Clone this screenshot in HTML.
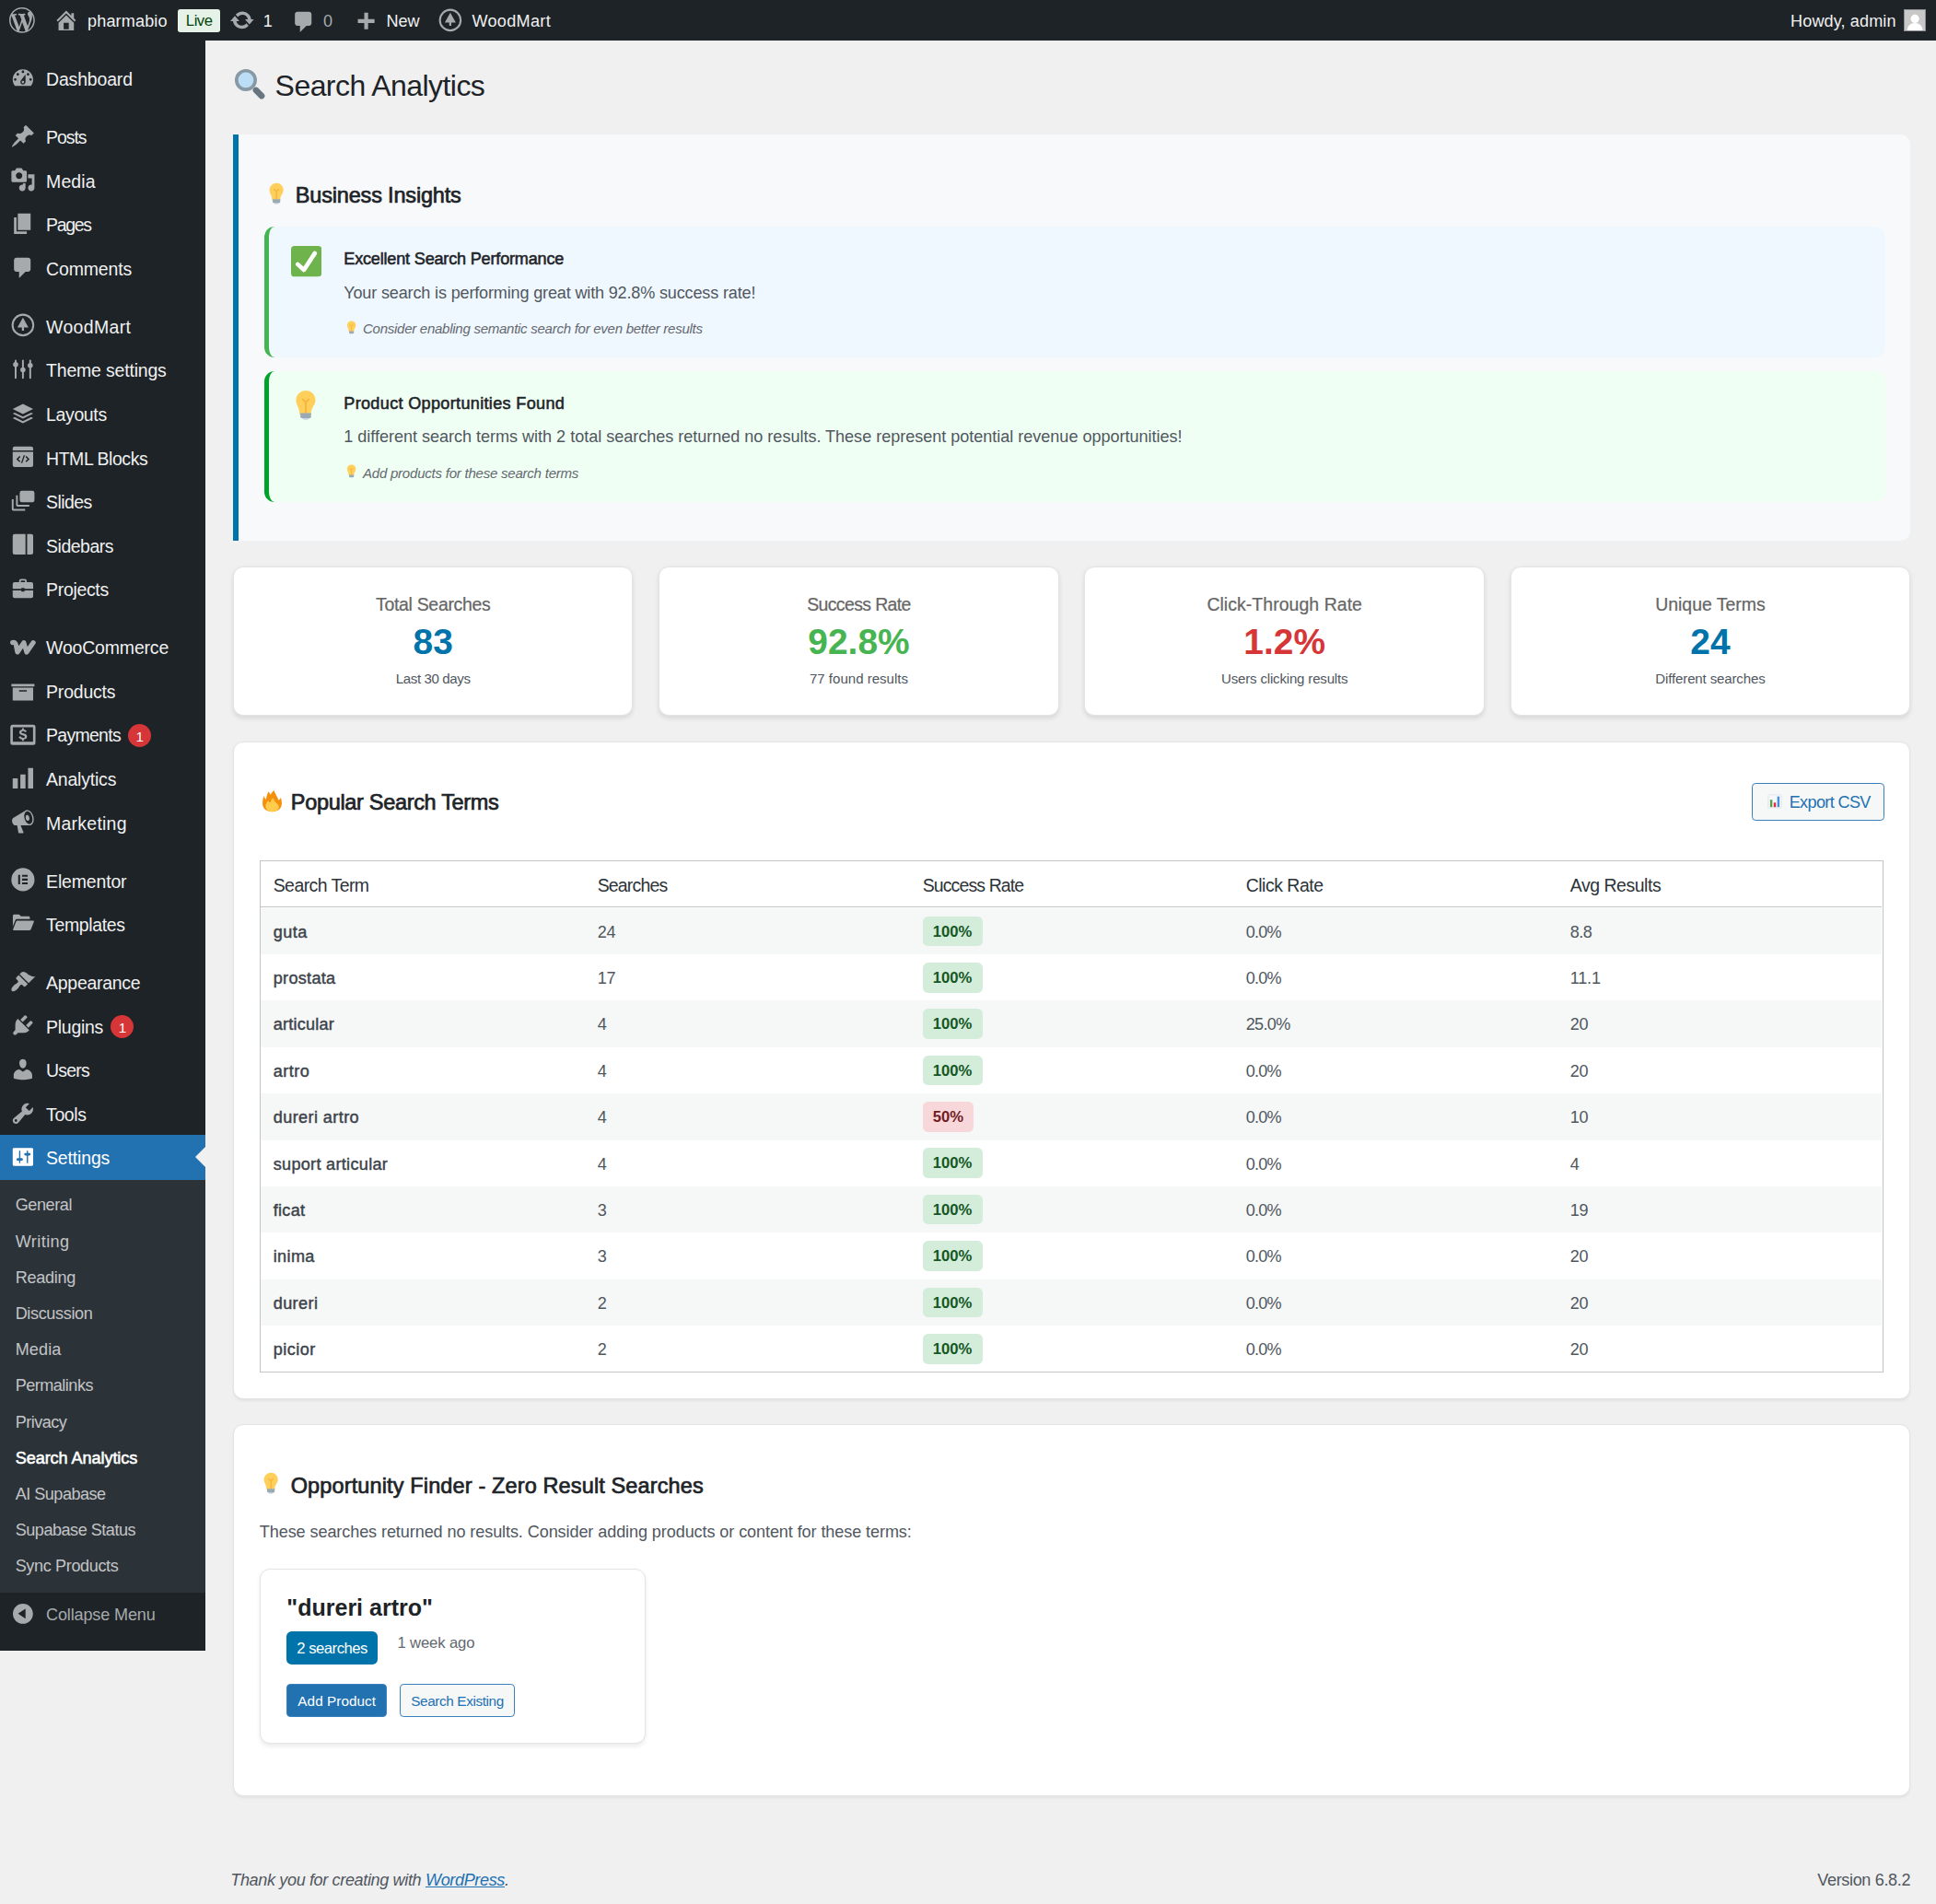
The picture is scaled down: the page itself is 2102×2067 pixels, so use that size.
<!DOCTYPE html>
<html lang="en"><head>
<meta charset="utf-8">
<title>Search Analytics ‹ pharmabio — WordPress</title>
<style>
html{zoom:1.3902;--bs:.135em;background:#f0f0f1;}
*{box-sizing:border-box;}
body{margin:0;padding:0;width:1512px;height:1486.800px;overflow:hidden;position:relative;background:#f0f0f1;color:#3c434a;
 font-family:"Liberation Sans",sans-serif;font-size:13px;line-height:18.200px;}
svg{display:block;}
a{color:#2271b1;}
/* ---------- admin bar ---------- */
#bar{position:absolute;left:0;top:0;width:1512px;height:32px;background:#1d2327;color:#f0f0f1;font-size:13px;line-height:calc(32px + var(--bs));z-index:5;}
#bar .it{position:absolute;top:0;height:32px;white-space:nowrap;}
#bar svg{position:absolute;fill:#a7aaad;}
#bar .st{stroke:#a7aaad;}
#bar .live{position:absolute;top:7.500px;height:17.500px;line-height:calc(17.500px + var(--bs));background:#e6f2e8;color:#00450c;border-radius:2px;width:33.200px;text-align:center;font-size:12px;}
#bar .dim{color:#a7aaad;}
#bar .av{position:absolute;left:1486.700px;top:7.200px;width:17.500px;height:17.500px;background:#c8c8c8;border:1px solid #8c8f94;overflow:hidden;}
/* ---------- side menu ---------- */
#menu{position:absolute;left:0;top:32px;width:160.500px;background:#1d2327;}
#menu .mi{position:absolute;left:0;width:160.500px;height:34.200px;color:#f0f0f1;font-size:14px;line-height:calc(34.200px + var(--bs));}
#menu .mi span.t{position:absolute;left:36px;top:0;white-space:nowrap;}
#menu .mi svg{position:absolute;left:8px;top:7px;width:20px;height:20px;fill:#a7aaad;}
#menu .st{stroke:#a7aaad;}
#menu .mi.cur{background:#2271b1;color:#fff;height:34.600px;}
#menu .mi.cur svg{fill:#fff;}
#menu .mi.cur:after{content:"";position:absolute;right:0;top:9.100px;border:8px solid transparent;border-right-color:#f0f0f1;}
#menu .bdg{display:inline-block;min-width:18px;height:18px;border-radius:9px;background:#d63638;color:#fff;font-size:11px;line-height:calc(18px + var(--bs));text-align:center;margin-left:6px;vertical-align:.300px;letter-spacing:0;}
#sub{position:absolute;left:0;width:160.500px;background:#2c3338;}
#sub div{position:absolute;left:12px;color:#c3c4c7;font-size:13px;line-height:calc(18.200px + var(--bs));white-space:nowrap;}
#sub div.on{color:#fff;-webkit-text-stroke:.030em;}
#menu .col{position:absolute;left:0;width:160px;height:34px;color:#a7aaad;font-size:13px;line-height:calc(34px + var(--bs));}
#menu .col span{position:absolute;left:36px;white-space:nowrap;}
#menu .col svg{position:absolute;left:8px;top:7px;width:20px;height:20px;fill:#a7aaad;}
/* ---------- content ---------- */
#wrap{position:absolute;left:182px;top:42px;width:1310px;}
h1{margin:0;padding:9px 0 4px;font-size:23px;font-weight:400;line-height:calc(29.900px + var(--bs));color:#1d2327;position:relative;height:42.900px;}
h1 span{position:absolute;left:32.800px;top:9px;white-space:nowrap;}
h2{color:#1d2327;font-size:16.900px;font-weight:normal;-webkit-text-stroke:.030em;margin:0;line-height:calc(18.200px + var(--bs));position:relative;}
.em{position:absolute;}
.insights{position:relative;margin-top:20px;height:317.400px;background:#f8f9fa;border-left:4.400px solid #0073aa;border-radius:0 8px 8px 0;}
.insights h2{position:absolute;left:20px;top:37.200px;}
.insights h2 span{position:absolute;left:24.500px;top:0;white-space:nowrap;}
.ins{position:absolute;left:20px;width:1266px;border-left:4px solid #46b450;border-radius:8px;}
.ins.i1{top:72.400px;height:101.500px;background:#f0f8ff;}
.ins.i2{top:184.900px;height:102.300px;background:#f0fff4;border-left-color:#00a32a;}
.ins h4{position:absolute;left:58.600px;top:15.600px;margin:0;font-size:13px;font-weight:normal;-webkit-text-stroke:.030em;color:#1d2327;white-space:nowrap;line-height:calc(18.200px + var(--bs));}
.ins p{position:absolute;left:58.600px;top:41.200px;margin:0;font-size:13px;line-height:calc(19.500px + var(--bs));color:#50575e;white-space:nowrap;}
.ins small{position:absolute;left:73.500px;top:70.300px;font-size:10.830px;font-style:italic;color:#646970;white-space:nowrap;line-height:calc(16.800px + var(--bs));}
.stats{position:relative;margin-top:20px;height:116.600px;}
.stat{position:absolute;top:0;width:312.500px;height:116.600px;background:#fff;border:1px solid #e3e4e6;border-radius:8px;box-shadow:0 2px 4px rgba(0,0,0,.1);text-align:center;}
.stat h3{position:absolute;left:0;width:100%;top:19.800px;margin:0;font-size:14px;-webkit-text-stroke:.012em;font-weight:normal;color:#666;line-height:calc(18.200px + var(--bs));}
.stat b{position:absolute;left:0;width:100%;top:36.500px;font-size:28px;line-height:calc(40px + var(--bs));}
.stat small{position:absolute;left:0;width:100%;top:78.300px;font-size:10.830px;color:#50575e;line-height:calc(16px + var(--bs));}
.card{position:relative;margin-top:20px;background:#fff;border:1px solid #e3e4e6;border-radius:8px;box-shadow:0 1px 2px rgba(0,0,0,.06);}
.pop{height:513.500px;}
.pop h2{position:absolute;left:20px;top:36.900px;}
.pop h2 span{position:absolute;left:24.500px;top:0;white-space:nowrap;}
.btn{position:absolute;border:1px solid #3a7fbb;border-radius:3px;background:#f6f7f7;color:#2271b1;font-size:13px;white-space:nowrap;}
.pop .btn{left:1185.300px;top:31.600px;width:103.600px;height:30px;line-height:calc(27.300px + var(--bs));}
.pop .btn span{position:absolute;left:28.700px;top:0;}
.tbl{position:absolute;left:20px;top:92px;width:1268px;height:400.200px;border:1px solid #c3c4c7;background:#fff;}
.tbl .hd{position:absolute;left:0;top:0;width:1266px;height:36.100px;border-bottom:1px solid #c3c4c7;font-size:14px;color:#2c3338;line-height:calc(35.800px + var(--bs));}
.tbl .r{position:absolute;left:0;width:1266px;height:36.200px;line-height:calc(36.200px + var(--bs));color:#50575e;}
.tbl .r.o{background:#f6f7f7;}
.tbl span{position:absolute;top:0;white-space:nowrap;}
.tbl .c1{left:10px;}.tbl .c2{left:263.200px;}.tbl .c3{left:517.100px;}.tbl .c4{left:769.600px;}.tbl .c5{left:1022.800px;}
.tbl .r .c1{color:#3c434a;-webkit-text-stroke:.024em;}
.tbl .bg{top:6.400px;height:23.400px;line-height:calc(23.400px + var(--bs));padding:0 8px;border-radius:4px;background:#d4edda;color:#155724;font-size:12px;font-weight:bold;}
.tbl .bg.red{background:#f8d7da;color:#721c24;}
.opp{height:290.400px;}
.opp h2{position:absolute;left:20px;top:36.900px;}
.opp h2 span{position:absolute;left:24.400px;top:0;white-space:nowrap;}
.opp p{position:absolute;left:20px;top:73.300px;margin:0;font-size:13px;line-height:calc(19.500px + var(--bs));color:#50575e;white-space:nowrap;}
.oc{position:absolute;left:20.400px;top:111.700px;width:301.300px;height:136.800px;border:1px solid #e2e4e7;border-radius:8px;background:#fff;box-shadow:0 2px 4px rgba(0,0,0,.08);}
.oc h4{position:absolute;left:20.100px;top:16.500px;margin:0;font-size:18px;line-height:calc(24px + var(--bs));font-weight:bold;color:#1d2327;white-space:nowrap;}
.oc .sb{position:absolute;left:20.100px;top:48.100px;height:26.300px;line-height:calc(26.300px + var(--bs));width:70.900px;text-align:center;background:#0073aa;color:#fff;border-radius:4px;font-size:12px;}
.oc .ago{position:absolute;left:106.500px;top:47.300px;line-height:calc(19.500px + var(--bs));font-size:12px;color:#646970;white-space:nowrap;}
.oc .btn{top:89.600px;height:25.800px;line-height:calc(24px + var(--bs));font-size:11px;text-align:center;}
.oc .b1{left:20.100px;width:78.300px;background:#2271b1;color:#fff;}
.oc .b2{left:108.600px;width:89.500px;}
#ft{position:absolute;top:1457.200px;left:180px;width:1312px;font-size:13px;line-height:calc(20px + var(--bs));color:#50575e;}
#ft i{position:absolute;left:0;top:0;white-space:nowrap;}
#ft a{text-decoration:underline;}
#ft span{position:absolute;right:0;top:0;white-space:nowrap;}

</style>
</head>
<body>
<div id="bar">
<div class="it" style="left:7px"><svg style="left:0;top:6px;width:20px;height:20px" viewBox="0 0 20 20" class="i20"><path d="M20 10c0-5.51-4.49-10-10-10C4.48 0 0 4.49 0 10c0 5.52 4.48 10 10 10 5.51 0 10-4.48 10-10zM7.78 15.37L4.37 6.22c.55-.02 1.17-.08 1.17-.08.5-.06.44-1.13-.06-1.11 0 0-1.45.11-2.37.11-.18 0-.37 0-.58-.01C4.12 2.69 6.87 1.11 10 1.11c2.33 0 4.45.87 6.05 2.34-.68-.11-1.65.39-1.65 1.58 0 .74.45 1.36.9 2.1.35.61.55 1.36.55 2.46 0 1.49-1.4 5-1.4 5l-3.03-8.37c.54-.02.82-.17.82-.17.5-.05.44-1.25-.06-1.22 0 0-1.44.12-2.38.12-.87 0-2.33-.12-2.33-.12-.5-.03-.56 1.2-.06 1.22l.92.08 1.26 3.41zM17.41 10c.24-.64.74-1.87.43-4.25.7 1.29 1.05 2.71 1.05 4.25 0 3.29-1.73 6.24-4.4 7.78.97-2.59 1.94-5.2 2.92-7.78zM6.1 18.09C3.12 16.65 1.11 13.53 1.11 10c0-1.3.23-2.48.72-3.59C3.25 10.3 4.67 14.2 6.1 18.09zm4.03-6.63l2.58 6.98c-.86.29-1.76.45-2.71.45-.79 0-1.57-.11-2.29-.33.81-2.38 1.62-4.74 2.42-7.1z"></path></svg></div>
<div class="it" style="left:42px"><svg style="left:0;top:6px;width:20px;height:20px" viewBox="0 0 20 20" class=""><path d="M16 8.5l1.53 1.53-1.06 1.06L10 4.62l-6.47 6.47-1.06-1.06L10 2.5l4 4v-2h2v4zm-6-2.46l6 5.99V18H4v-5.97zM12 17v-5H8v5h4z"></path></svg><span style="position: absolute; left: 26.4px; letter-spacing: 0.102px;" class="abt">pharmabio</span></div>
<div class="live" style="left: 138.9px; letter-spacing: -0.359px;">Live</div>
<div class="it" style="left:179px"><svg style="left:0;top:6px;width:20px;height:20px" viewBox="0 0 20 20" class=""><path d="M10.2 3.28c3.53 0 6.43 2.61 6.92 6h2.08l-3.5 4-3.5-4h2.32c-.45-1.97-2.21-3.45-4.32-3.45-1.45 0-2.73.71-3.54 1.78L4.95 5.66C6.23 4.2 8.11 3.28 10.2 3.28zm-.4 13.44c-3.52 0-6.43-2.61-6.92-6H.8l3.5-4c1.17 1.33 2.33 2.67 3.5 4H5.48c.45 1.97 2.21 3.45 4.32 3.45 1.45 0 2.73-.71 3.54-1.78l1.71 1.95c-1.28 1.46-3.15 2.38-5.25 2.38z"></path></svg><span style="position: absolute; left: 26.5px; letter-spacing: -0.219px;" class="abt">1</span></div>
<div class="it" style="left:226px"><svg style="left:1.100px;top:7.400px;width:20px;height:20px" viewBox="0 0 20 20" class=""><path d="M5 2h9c1.1 0 2 .9 2 2v7c0 1.1-.9 2-2 2h-2l-5 5v-5H5c-1.1 0-2-.9-2-2V4c0-1.1.9-2 2-2z"></path></svg><span style="position: absolute; left: 26.5px; letter-spacing: -0.219px;" class="abt dim">0</span></div>
<div class="it" style="left:275.500px"><svg style="left:-.300px;top:7.900px;width:20px;height:20px" viewBox="0 0 20 20" class=""><path d="M17 7v3h-5v5H9v-5H4V7h5V2h3v5h5z"></path></svg><span style="position: absolute; left: 26.3px; letter-spacing: -0.033px;" class="abt">New</span></div>
<div class="it" style="left:342px"><svg style="left:0;top:6px;width:20px;height:20px" viewBox="0 0 20 20" class=""><circle cx="10" cy="10" r="8.1" fill="none" stroke-width="1.5" class="st"></circle><path d="M10 4.2l4.3 7.6h-3.5v2.6H9.2v-2.6H5.7z"></path></svg><span style="position: absolute; left: 26.6px; letter-spacing: 0.237px;" class="abt">WoodMart</span></div>
<div class="it" style="left:1398.4px"><span class="abt" style="letter-spacing: 0.091px;">Howdy, admin</span></div>
<div class="av"><svg viewBox="0 0 16 16" style="left:0;top:0;width:16px;height:16px;fill:#fff"><circle cx="8" cy="6.800" r="3.300"></circle><path d="M2 16c0-4 2.600-6 6-6s6 2 6 6z"></path></svg></div>
</div>
<div id="menu" style="height:1257.1px">
<div class="mi" style="top:12.00px"><svg viewBox="0 0 20 20" class=""><path d="M3.76 16h12.48c1.1-1.37 1.76-3.11 1.76-5 0-4.42-3.58-8-8-8s-8 3.58-8 8c0 1.89.66 3.63 1.76 5zM10 4c.55 0 1 .45 1 1s-.45 1-1 1-1-.45-1-1 .45-1 1-1zM6 6c.55 0 1 .45 1 1s-.45 1-1 1-1-.45-1-1 .45-1 1-1zm8 0c.55 0 1 .45 1 1s-.45 1-1 1-1-.45-1-1 .45-1 1-1zm-5.37 5.55L12 7v6c0 1.1-.9 2-2 2s-2-.9-2-2c0-.57.24-1.08.63-1.45zM4 10c.55 0 1 .45 1 1s-.45 1-1 1-1-.45-1-1 .45-1 1-1zm12 0c.55 0 1 .45 1 1s-.45 1-1 1-1-.45-1-1 .45-1 1-1zm-5 3c0-.55-.45-1-1-1s-1 .45-1 1 .45 1 1 1 1-.45 1-1z"></path></svg><span class="t" style="letter-spacing: -0.114px;">Dashboard</span></div>
<div class="mi" style="top:57.24px"><svg viewBox="0 0 20 20" class=""><path d="M10.44 3.02l1.82-1.82 6.36 6.35-1.83 1.82c-1.05-.68-2.48-.57-3.41.36l-.75.75c-.92.93-1.04 2.35-.35 3.41l-1.83 1.82-2.41-2.41-2.8 2.79c-.42.42-3.38 2.71-3.8 2.29s1.86-3.39 2.28-3.81l2.79-2.79L4.1 9.36l1.83-1.82c1.05.69 2.48.57 3.4-.36l.75-.75c.93-.92 1.05-2.35.36-3.41z"></path></svg><span class="t" style="letter-spacing: -0.76px;">Posts</span></div>
<div class="mi" style="top:91.48px"><svg viewBox="0 0 20 20" class=""><path d="M13 11V4c0-.55-.45-1-1-1h-1.67L9 1H5L3.67 3H2c-.55 0-1 .45-1 1v7c0 .55.45 1 1 1h10c.55 0 1-.45 1-1zM7 4.5c1.38 0 2.5 1.12 2.5 2.5S8.38 9.5 7 9.5 4.5 8.38 4.5 7 5.62 4.5 7 4.5zM14 6h5v10.5c0 1.38-1.12 2.5-2.5 2.5S14 17.88 14 16.5s1.12-2.5 2.5-2.5c.17 0 .34.02.5.05V9h-3V6zm-4 8.05V13h2v3.5c0 1.38-1.12 2.5-2.5 2.5S7 17.88 7 16.5 8.12 14 9.5 14c.17 0 .34.02.5.05z"></path></svg><span class="t" style="letter-spacing: 0.105px;">Media</span></div>
<div class="mi" style="top:125.72px"><svg viewBox="0 0 20 20" class=""><path d="M6 15V2h10v13H6zm-1 1h8v2H3V5h2v11z"></path></svg><span class="t" style="letter-spacing: -0.94px;">Pages</span></div>
<div class="mi" style="top:159.96px"><svg viewBox="0 0 20 20" class=""><path d="M5 2h9c1.1 0 2 .9 2 2v7c0 1.1-.9 2-2 2h-2l-5 5v-5H5c-1.1 0-2-.9-2-2V4c0-1.1.9-2 2-2z"></path></svg><span class="t" style="letter-spacing: -0.099px;">Comments</span></div>
<div class="mi" style="top:205.20px"><svg viewBox="0 0 20 20" class=""><circle cx="10" cy="10" r="8.1" fill="none" stroke-width="1.5" class="st"></circle><path d="M10 4.2l4.3 7.6h-3.5v2.6H9.2v-2.6H5.7z"></path></svg><span class="t" style="letter-spacing: 0.255px;">WoodMart</span></div>
<div class="mi" style="top:239.44px"><svg viewBox="0 0 20 20" class=""><rect x="3.6" y="2.5" width="1.4" height="15" rx=".7"></rect><circle cx="4.3" cy="6.3" r="2"></circle><rect x="9.3" y="2.5" width="1.4" height="15" rx=".7"></rect><circle cx="10" cy="10.5" r="2"></circle><rect x="15" y="2.5" width="1.4" height="15" rx=".7"></rect><circle cx="15.7" cy="7" r="2"></circle></svg><span class="t" style="letter-spacing: -0.121px;">Theme settings</span></div>
<div class="mi" style="top:273.68px"><svg viewBox="0 0 20 20" class=""><path d="M10 2.5l8 4-8 4-8-4z"></path><path d="M3.6 9.3L2 10.1l8 4 8-4-1.6-.8-6.4 3.2z"></path><path d="M3.6 12.8L2 13.6l8 4 8-4-1.6-.8-6.4 3.2z"></path></svg><span class="t" style="letter-spacing: -0.248px;">Layouts</span></div>
<div class="mi" style="top:307.92px"><svg viewBox="0 0 20 20" class=""><path fill-rule="evenodd" d="M3.5 2h13A1.5 1.5 0 0 1 18 3.500V5H2V3.5A1.5 1.5 0 0 1 3.5 2zM2 6.2h16v10.300a1.5 1.5 0 0 1-1.5 1.5h-13A1.5 1.5 0 0 1 2 16.500zM7.300 9.300L4.800 11.800l2.500 2.500.8-.8-1.700-1.700 1.700-1.700zm5.400 0l-.8.8 1.700 1.700-1.700 1.700.8.8 2.500-2.500zM10.600 8.800l-2.100 6.100h1l2.100-6.100z"></path></svg><span class="t" style="letter-spacing: -0.311px;">HTML Blocks</span></div>
<div class="mi" style="top:342.16px"><svg viewBox="0 0 20 20" class=""><rect x="7.5" y="2" width="11.5" height="9" rx="1.6"></rect><path d="M4.600 5.500h1.400v7.500h9v1.400h-9.200a1.200 1.200 0 0 1-1.200-1.200z"></path><path d="M1.300 8.700h1.400v7.500h9v1.400H2.500a1.200 1.200 0 0 1-1.200-1.200z"></path></svg><span class="t" style="letter-spacing: -0.401px;">Slides</span></div>
<div class="mi" style="top:376.40px"><svg viewBox="0 0 20 20" class=""><path d="M3.500 2h8.500v16H3.500A1.500 1.500 0 0 1 2 16.500v-13A1.500 1.500 0 0 1 3.500 2zM13.300 2h3.200A1.500 1.500 0 0 1 18 3.500v13a1.500 1.500 0 0 1-1.500 1.500h-3.200z"></path></svg><span class="t" style="letter-spacing: -0.338px;">Sidebars</span></div>
<div class="mi" style="top:410.64px"><svg viewBox="0 0 20 20" class=""><path fill-rule="evenodd" d="M7 5V4.200A1.700 1.700 0 0 1 8.700 2.500h2.600A1.700 1.700 0 0 1 13 4.200V5h3.500A1.500 1.500 0 0 1 18 6.500V10.300H11.200V9.600H8.800v.7H2V6.500A1.500 1.500 0 0 1 3.500 5zm1.300 0h3.400v-.7a.5.5 0 0 0-.5-.5H8.800a.5.5 0 0 0-.5.5zM2 11.500h6.800v.9h2.400v-.9H18v4.500a1.500 1.500 0 0 1-1.500 1.500h-13A1.500 1.500 0 0 1 2 16z"></path></svg><span class="t" style="letter-spacing: -0.223px;">Projects</span></div>
<div class="mi" style="top:455.88px"><svg viewBox="0 0 20 20" class=""><path d="M1.900 6.900Q4.100 6.300 4.600 8.800L5.700 14.400L10.700 7L12.900 14.400L18.100 6.900" fill="none" class="st" stroke-width="3.700" stroke-linecap="round" stroke-linejoin="round"></path></svg><span class="t" style="letter-spacing: -0.112px;">WooCommerce</span></div>
<div class="mi" style="top:490.12px"><svg viewBox="0 0 20 20" class=""><path transform="translate(0 .6)" d="M19 4v2H1V4h18zM2 7h16v10H2V7zm11 3V9H7v1h6z"></path></svg><span class="t" style="letter-spacing: -0.129px;">Products</span></div>
<div class="mi" style="top:524.36px"><svg viewBox="0 0 20 20" class=""><path fill-rule="evenodd" d="M2 2.700h16a1.800 1.800 0 0 1 1.800 1.800v12.300a1.800 1.800 0 0 1-1.800 1.800H2a1.800 1.800 0 0 1-1.800-1.800V4.500A1.800 1.800 0 0 1 2 2.700zm.1 2v11.300h15.800V4.700z"></path><path transform="translate(10 10.400) scale(1.150 1.120) translate(-10 -9.750)" d="M9.400 5.300h1.200v.9c1 .1 1.700.6 2 1.400l-1.300.5c-.2-.5-.6-.7-1.200-.7-.7 0-1.100.3-1.100.7 0 .5.500.6 1.500.9 1.300.3 2.300.8 2.300 2.100 0 1.100-.8 1.900-2.200 2.100v.9H9.400v-.9c-1.200-.2-2-.8-2.300-1.800l1.400-.5c.2.700.8 1.100 1.600 1.100.8 0 1.200-.3 1.200-.8 0-.5-.4-.7-1.600-1-1.200-.3-2.200-.8-2.200-2 0-1 .8-1.800 1.900-2z"></path></svg><span class="t" style="letter-spacing: -0.501px;">Payments<span class="bdg">1</span></span></div>
<div class="mi" style="top:558.60px"><svg viewBox="0 0 20 20" class=""><path d="M18 18V2h-4v16h4zm-6 0V7H8v11h4zm-6 0v-8H2v8h4z"></path></svg><span class="t" style="letter-spacing: -0.137px;">Analytics</span></div>
<div class="mi" style="top:592.84px"><svg viewBox="0 0 20 20" class=""><path fill-rule="evenodd" d="M18.150 5.940c.46 1.620.38 3.220-.02 4.480-.42 1.280-1.260 2.180-2.300 2.480-.16.06-.26.06-.4.06-.06.020-.12.020-.18.020-.06.020-.14.020-.22.020h-6.800l2.220 5.500c.02.140-.06.260-.14.340-.08.100-.24.160-.34.160H6.950c-.1 0-.26-.06-.34-.16-.08-.08-.16-.2-.14-.34l-1-5.500H4.250l-.02-.02c-.5.06-1.080-.18-1.540-.62s-.88-1.080-1.060-1.880c-.24-.8-.2-1.560-.02-2.200.18-.62.58-1.080 1.060-1.300l.02-.02 9-5.400c.1-.06.18-.1.240-.16.060-.04.140-.08.240-.12.160-.08.280-.12.500-.18 1.040-.3 2.240.1 3.220.98s1.840 2.240 2.260 3.860zm-2.580 5.980h-.02c.4-.1.740-.34 1.040-.7.580-.7.860-1.760.86-3.040 0-.64-.1-1.300-.28-1.980-.34-1.360-1.020-2.500-1.780-3.240s-1.680-1.100-2.460-.88c-.82.220-1.400.96-1.700 2-.32 1.040-.28 2.360.06 3.720.38 1.360 1 2.500 1.800 3.240.78.740 1.620 1.100 2.480.88zm-2.540-7.080c.22-.04.42-.02.62.04.38.16.76.48 1.020 1s.42 1.200.42 1.780c0 .3-.04.56-.12.8-.18.480-.44.840-.86.940-.34.100-.8-.06-1.140-.4s-.64-.86-.78-1.500c-.18-.62-.12-1.240.02-1.720s.48-.84.820-.94z"></path></svg><span class="t" style="letter-spacing: 0.185px;">Marketing</span></div>
<div class="mi" style="top:638.08px"><svg viewBox="0 0 20 20" class=""><path fill-rule="evenodd" d="M10 .950a9.050 9.050 0 1 1 0 18.100 9.050 9.050 0 0 1 0-18.100zM6.300 6.300v7.400h1.500V6.300zm3 0v1.500h4.400V6.300zm0 2.950v1.500h4.400v-1.500zm0 2.950v1.500h4.400v-1.500z"></path></svg><span class="t" style="letter-spacing: -0.102px;">Elementor</span></div>
<div class="mi" style="top:672.32px"><svg viewBox="0 0 20 20" class=""><g transform="translate(.700 -.200) scale(.940)"><path d="M1.500 4.200c0-.7.500-1.200 1.200-1.200h4l1.600 1.700h6.200c.7 0 1.200.5 1.200 1.200V7H5.200c-.8 0-1.400.4-1.700 1.100L1.500 13z"></path><path d="M5.300 8.300h13c.6 0 .9.500.7 1L16.600 15.400c-.2.500-.7.900-1.300.9H2.300c-.5 0-.8-.4-.6-.9L4.100 9.200c.2-.5.700-.9 1.200-.9z"></path></g></svg><span class="t" style="letter-spacing: -0.24px;">Templates</span></div>
<div class="mi" style="top:717.56px"><svg viewBox="0 0 20 20" class=""><path d="M14.48 11.06L7.41 3.99l1.5-1.5c.5-.56 2.3-.47 3.51.32 1.21.8 1.43 1.28 2.91 2.1 1.18.64 2.45 1.26 4.45.85zm-.71.71L6.7 4.7 4.93 6.47c-.39.39-.39 1.02 0 1.41l1.06 1.06c.39.39.39 1.03 0 1.42-.6.6-1.43 1.11-2.21 1.69-.35.26-.7.53-1.01.84C1.43 14.23.4 16.08 1.4 17.07c.99 1 2.84-.03 4.18-1.36.31-.31.58-.66.85-1.02.57-.78 1.08-1.61 1.69-2.21.39-.39 1.02-.39 1.41 0l1.06 1.06c.39.39 1.02.39 1.41 0z"></path></svg><span class="t" style="letter-spacing: -0.186px;">Appearance</span></div>
<div class="mi" style="top:751.80px"><svg viewBox="0 0 20 20" class=""><path d="M13.11 4.36L9.87 7.6 8 5.73l3.24-3.24c.35-.34 1.05-.2 1.56.32.52.51.66 1.21.31 1.55zm-8 1.77l.91-1.12 9.01 9.01-1.19.84c-.71.71-2.63 1.16-3.82 1.16H6.14L4.9 17.26c-.59.59-1.54.59-2.12 0-.59-.58-.59-1.53 0-2.12l1.24-1.24v-3.88c0-1.13.4-3.19 1.09-3.89zm7.26 3.97l3.24-3.24c.34-.35 1.04-.21 1.55.31.52.51.66 1.21.31 1.55l-3.24 3.25z"></path></svg><span class="t" style="letter-spacing: -0.184px;">Plugins<span class="bdg">1</span></span></div>
<div class="mi" style="top:786.04px"><svg viewBox="0 0 20 20" class=""><path d="M10 9.25c-2.27 0-2.73-3.44-2.73-3.44C7 4.02 7.82 2 9.97 2c2.16 0 2.98 2.02 2.71 3.81 0 0-.41 3.44-2.68 3.44zm0 2.57L12.72 10c2.39 0 4.52 2.33 4.52 4.53v2.49s-3.65 1.13-7.24 1.13c-3.65 0-7.24-1.13-7.24-1.13v-2.49c0-2.25 1.94-4.48 4.47-4.48z"></path></svg><span class="t" style="letter-spacing: -0.575px;">Users</span></div>
<div class="mi" style="top:820.28px"><svg viewBox="0 0 20 20" class=""><path d="M16.68 9.77c-1.34 1.34-3.3 1.67-4.95.99l-5.41 6.52c-.99.99-2.59.99-3.58 0s-.99-2.59 0-3.57l6.52-5.42c-.68-1.65-.35-3.61.99-4.95 1.28-1.28 3.12-1.62 4.72-1.06l-2.89 2.89 2.82 2.82 2.86-2.87c.53 1.58.18 3.39-1.08 4.65zM3.81 16.21c.4.39 1.04.39 1.43 0 .4-.4.4-1.04 0-1.43-.39-.4-1.03-.4-1.43 0-.39.39-.39 1.03 0 1.43z"></path></svg><span class="t" style="letter-spacing: -0.284px;">Tools</span></div>
<div class="mi cur" style="top:854.52px"><svg viewBox="0 0 20 20" class=""><path d="M18 16V4c0-.55-.45-1-1-1H3c-.55 0-1 .45-1 1v12c0 .55.45 1 1 1h14c.55 0 1-.45 1-1zM8 11h1c.55 0 1 .45 1 1s-.45 1-1 1H8v1.5c0 .28-.22.5-.5.5s-.5-.22-.5-.5V13H6c-.55 0-1-.45-1-1s.45-1 1-1h1V5.5c0-.28.22-.5.5-.5s.5.22.5.5V11zm5-2h-1c-.55 0-1-.45-1-1s.45-1 1-1h1V5.5c0-.28.22-.5.5-.5s.5.22.5.5V7h1c.55 0 1 .45 1 1s-.45 1-1 1h-1v5.5c0 .28-.22.5-.5.5s-.5-.22-.5-.5V9z"></path></svg><span class="t" style="letter-spacing: -0.107px;">Settings</span></div>
<div id="sub" style="top:889.2px;height:322.3px"><div style="top: 10.6px; letter-spacing: -0.299px;">General</div><div style="top: 38.8px; letter-spacing: 0.308px;">Writing</div><div style="top: 67px; letter-spacing: -0.206px;">Reading</div><div style="top: 95.2px; letter-spacing: -0.256px;">Discussion</div><div style="top: 123.4px; letter-spacing: 0.097px;">Media</div><div style="top: 151.6px; letter-spacing: -0.363px;">Permalinks</div><div style="top: 179.8px; letter-spacing: -0.362px;">Privacy</div><div class="on" style="top: 208px; letter-spacing: -0.043px;">Search Analytics</div><div style="top: 236.2px; letter-spacing: -0.357px;">AI Supabase</div><div style="top: 264.4px; letter-spacing: -0.343px;">Supabase Status</div><div style="top: 292.6px; letter-spacing: -0.259px;">Sync Products</div></div>
<div class="col" style="top:1211.4px"><svg viewBox="0 0 20 20" class=""><path d="M10 2.16c4.33 0 7.84 3.51 7.84 7.84s-3.51 7.84-7.84 7.84S2.16 14.33 2.16 10 5.67 2.16 10 2.16zm2 11.72V6.12L6.18 9.97z"></path></svg><span style="letter-spacing: -0.109px;">Collapse Menu</span></div>
</div>
<div id="wrap">
<h1><svg class="em" style="left:.800px;top:11.400px;width:24.800px;height:24.800px" viewBox="0 0 36 36"><path d="M25 25L31.400 31.400" stroke="#66757f" stroke-width="7" stroke-linecap="round" fill="none"></path><circle cx="13.550" cy="13.550" r="12.550" fill="#8899a6"></circle><circle cx="13.550" cy="13.550" r="8.750" fill="#bbddf5"></circle></svg><span style="letter-spacing: -0.388px;">Search Analytics</span></h1>
<div class="insights">
 <h2><svg class="em" style="left:.900px;top:0;width:17.500px;height:17.500px" viewBox="0 0 36 36"><g transform="translate(18 0) scale(1.020 1) translate(-18 0)"><path d="M29 12c0 6.200-5 8.800-5 15.500 0 3.500-3.500 3.800-6 3.800-2.200 0-7-.8-7-3.800C11 20.800 7 18.200 7 12 7 5.800 12.300 1 18.200 1 24.200 1 29 5.800 29 12z" fill="#ffcf5c"></path><path d="M22.200 32.400c0 .8-.9 2.600-4.200 2.600s-4.200-1.800-4.200-2.600v-1.800h8.400z" fill="#ccd6dd"></path><path d="M22.200 10.300a1 1 0 0 0-1.400 0L18 13.100l-2.800-2.800a1 1 0 0 0-1.400 1.400l3.200 3.200V26a1 1 0 0 0 2 0V14.900l3.200-3.200a1 1 0 0 0 0-1.400z" fill="#f7b53c"></path><path d="M24 31a2 2 0 0 1-2 2h-8a2 2 0 0 1 0-4h8a2 2 0 0 1 2 2z" fill="#99aab5"></path><path d="M12 27h12v3H12z" fill="#99aab5"></path></g></svg><span style="letter-spacing: -0.126px;">Business Insights</span></h2>
 <div class="ins i1"><svg class="em" style="left:17.300px;top:15px;width:24px;height:24px" viewBox="0 0 36 36"><rect x="0" y="0" width="36" height="36" rx="4" fill="#6fb34d"></rect><path d="M29.300 6.400a2.500 2.500 0 0 0-3.500.7L14.600 24.300l-5.100-4.700a2.500 2.500 0 0 0-3.400 3.700l7.300 6.700c.5.400 1.100.7 1.700.7.700 0 1.500-.3 2.100-1.200.3-.5 12.800-19.600 12.800-19.600a2.500 2.500 0 0 0-.7-3.500z" fill="#fff"></path></svg>
  <h4 style="letter-spacing: -0.13px;">Excellent Search Performance</h4>
  <p style="letter-spacing: -0.117px;">Your search is performing great with 92.8% success rate!</p>
  <svg class="em" style="left:59.300px;top:72.700px;width:11px;height:11px" viewBox="0 0 36 36"><g transform="translate(18 0) scale(1.020 1) translate(-18 0)"><path d="M29 12c0 6.200-5 8.800-5 15.500 0 3.500-3.500 3.800-6 3.800-2.200 0-7-.8-7-3.800C11 20.800 7 18.200 7 12 7 5.800 12.300 1 18.200 1 24.200 1 29 5.800 29 12z" fill="#ffcf5c"></path><path d="M22.200 32.400c0 .8-.9 2.600-4.200 2.600s-4.200-1.800-4.200-2.600v-1.800h8.400z" fill="#ccd6dd"></path><path d="M22.200 10.300a1 1 0 0 0-1.400 0L18 13.100l-2.800-2.800a1 1 0 0 0-1.400 1.400l3.200 3.200V26a1 1 0 0 0 2 0V14.900l3.200-3.200a1 1 0 0 0 0-1.400z" fill="#f7b53c"></path><path d="M24 31a2 2 0 0 1-2 2h-8a2 2 0 0 1 0-4h8a2 2 0 0 1 2 2z" fill="#99aab5"></path><path d="M12 27h12v3H12z" fill="#99aab5"></path></g></svg><small style="letter-spacing: -0.202px;">Consider enabling semantic search for even better results</small>
 </div>
 <div class="ins i2"><svg class="em" style="left:16.650px;top:14.700px;width:24.400px;height:24.400px" viewBox="0 0 36 36"><g transform="translate(18 0) scale(1.020 1) translate(-18 0)"><path d="M29 12c0 6.200-5 8.800-5 15.500 0 3.500-3.500 3.800-6 3.800-2.200 0-7-.8-7-3.800C11 20.800 7 18.200 7 12 7 5.800 12.300 1 18.200 1 24.200 1 29 5.800 29 12z" fill="#ffcf5c"></path><path d="M22.200 32.400c0 .8-.9 2.600-4.200 2.600s-4.200-1.800-4.200-2.600v-1.800h8.400z" fill="#ccd6dd"></path><path d="M22.200 10.300a1 1 0 0 0-1.400 0L18 13.100l-2.800-2.800a1 1 0 0 0-1.400 1.400l3.200 3.200V26a1 1 0 0 0 2 0V14.900l3.200-3.200a1 1 0 0 0 0-1.400z" fill="#f7b53c"></path><path d="M24 31a2 2 0 0 1-2 2h-8a2 2 0 0 1 0-4h8a2 2 0 0 1 2 2z" fill="#99aab5"></path><path d="M12 27h12v3H12z" fill="#99aab5"></path></g></svg>
  <h4 style="letter-spacing: 0.239px;">Product Opportunities Found</h4>
  <p style="letter-spacing: -0.017px;">1 different search terms with 2 total searches returned no results. These represent potential revenue opportunities!</p>
  <svg class="em" style="left:59.300px;top:72.700px;width:11px;height:11px" viewBox="0 0 36 36"><g transform="translate(18 0) scale(1.020 1) translate(-18 0)"><path d="M29 12c0 6.200-5 8.800-5 15.500 0 3.500-3.500 3.800-6 3.800-2.200 0-7-.8-7-3.800C11 20.800 7 18.200 7 12 7 5.800 12.300 1 18.200 1 24.200 1 29 5.800 29 12z" fill="#ffcf5c"></path><path d="M22.200 32.400c0 .8-.9 2.600-4.200 2.600s-4.200-1.800-4.200-2.600v-1.800h8.400z" fill="#ccd6dd"></path><path d="M22.200 10.300a1 1 0 0 0-1.400 0L18 13.100l-2.800-2.800a1 1 0 0 0-1.400 1.400l3.200 3.200V26a1 1 0 0 0 2 0V14.900l3.200-3.200a1 1 0 0 0 0-1.400z" fill="#f7b53c"></path><path d="M24 31a2 2 0 0 1-2 2h-8a2 2 0 0 1 0-4h8a2 2 0 0 1 2 2z" fill="#99aab5"></path><path d="M12 27h12v3H12z" fill="#99aab5"></path></g></svg><small style="letter-spacing: -0.173px;">Add products for these search terms</small>
 </div>
</div>
<div class="stats">
 <div class="stat" style="left:0"><h3 style="letter-spacing: -0.214px;">Total Searches</h3><b style="color:#0073aa">83</b><small style="letter-spacing: -0.266px;">Last 30 days</small></div>
 <div class="stat" style="left:332.500px"><h3 style="letter-spacing: -0.451px;">Success Rate</h3><b style="color:#46b450">92.8%</b><small style="letter-spacing: -0.003px;">77 found results</small></div>
 <div class="stat" style="left:665px"><h3 style="letter-spacing: 0.041px;">Click-Through Rate</h3><b style="color:#d63638">1.2%</b><small style="letter-spacing: -0.132px;">Users clicking results</small></div>
 <div class="stat" style="left:997.500px"><h3 style="letter-spacing: -0.012px;">Unique Terms</h3><b style="color:#0073aa">24</b><small style="letter-spacing: -0.106px;">Different searches</small></div>
</div>
<div class="card pop">
 <h2><svg class="em" style="left:.600px;top:-.100px;width:18px;height:18px" viewBox="0 0 36 36"><path d="M18 35C9 35 3 29.500 3 22C3 17 4 13.500 4.600 10.500C6 13 7.500 14.800 8.600 15.600C9 11 10.500 6.500 12.600 3.400C13.500 5.500 14.600 7.200 15.600 8.200C17 5.500 19 3 21 1.400C22 5.500 24.500 9 26.200 12.600C27 14.200 27.500 15.500 27.800 16.800C29.500 16 31 14.500 31.500 12.500C32.500 15.500 33 18.500 33 22C33 29.500 27 35 18 35Z" fill="#f4900c"></path><path transform="translate(18 35) scale(1.250 1.120) translate(-18 -35)" d="M18 35C13 35 9.800 31.500 9.800 27.300C9.800 24 11.500 21.500 13 19.500C13.800 21 14.800 22 15.800 22.400C16 19.500 17.500 17 19.300 15.600C19.800 18.500 21.500 20.500 23.300 22.600C25 24.500 26.400 26 26.400 28C26.400 32 23 35 18 35Z" fill="#ffcc4d"></path></svg><span style="letter-spacing: -0.226px;">Popular Search Terms</span></h2>
 <div class="btn"><svg class="em" style="left:12px;top:8.300px;width:11.500px;height:11.500px" viewBox="0 0 36 36"><rect x="1" y="1" width="34" height="34" rx="3" fill="#dfe5ea"></rect><rect x="3" y="3" width="30" height="30" rx="1.500" fill="#f5f8fa"></rect><rect x="6.500" y="14" width="5.500" height="18" fill="#5c9e47"></rect><rect x="15.300" y="21" width="5.500" height="11" fill="#dd2e44"></rect><rect x="24" y="6" width="5.500" height="26" fill="#4a90d9"></rect></svg><span style="letter-spacing: -0.458px;">Export CSV</span></div>
 <div class="tbl">
  <div class="hd"><span class="c1" style="letter-spacing: -0.399px;">Search Term</span><span class="c2" style="letter-spacing: -0.593px;">Searches</span><span class="c3" style="letter-spacing: -0.621px;">Success Rate</span><span class="c4" style="letter-spacing: -0.35px;">Click Rate</span><span class="c5" style="letter-spacing: -0.323px;">Avg Results</span></div>
  <div class="r o" style="top:36.7px"><span class="c1" style="letter-spacing: 0.374px;">guta</span><span class="c2" style="letter-spacing: -0.219px;">24</span><span class="c3 bg">100%</span><span class="c4" style="letter-spacing: -0.537px;">0.0%</span><span class="c5" style="letter-spacing: -0.409px;">8.8</span></div>
  <div class="r" style="top:73.0px"><span class="c1" style="letter-spacing: 0.225px;">prostata</span><span class="c2" style="letter-spacing: -0.219px;">17</span><span class="c3 bg">100%</span><span class="c4" style="letter-spacing: -0.537px;">0.0%</span><span class="c5" style="letter-spacing: -0.123px;">11.1</span></div>
  <div class="r o" style="top:109.2px"><span class="c1" style="letter-spacing: 0.164px;">articular</span><span class="c2" style="letter-spacing: -0.219px;">4</span><span class="c3 bg">100%</span><span class="c4" style="letter-spacing: -0.474px;">25.0%</span><span class="c5" style="letter-spacing: -0.219px;">20</span></div>
  <div class="r" style="top:145.4px"><span class="c1" style="letter-spacing: 0.355px;">artro</span><span class="c2" style="letter-spacing: -0.219px;">4</span><span class="c3 bg">100%</span><span class="c4" style="letter-spacing: -0.537px;">0.0%</span><span class="c5" style="letter-spacing: -0.219px;">20</span></div>
  <div class="r o" style="top:181.7px"><span class="c1" style="letter-spacing: 0.299px;">dureri artro</span><span class="c2" style="letter-spacing: -0.219px;">4</span><span class="c3 bg red">50%</span><span class="c4" style="letter-spacing: -0.537px;">0.0%</span><span class="c5" style="letter-spacing: -0.219px;">10</span></div>
  <div class="r" style="top:217.9px"><span class="c1" style="letter-spacing: 0.224px;">suport articular</span><span class="c2" style="letter-spacing: -0.219px;">4</span><span class="c3 bg">100%</span><span class="c4" style="letter-spacing: -0.537px;">0.0%</span><span class="c5" style="letter-spacing: -0.219px;">4</span></div>
  <div class="r o" style="top:254.2px"><span class="c1" style="letter-spacing: 0.226px;">ficat</span><span class="c2" style="letter-spacing: -0.219px;">3</span><span class="c3 bg">100%</span><span class="c4" style="letter-spacing: -0.537px;">0.0%</span><span class="c5" style="letter-spacing: -0.219px;">19</span></div>
  <div class="r" style="top:290.4px"><span class="c1" style="letter-spacing: 0.264px;">inima</span><span class="c2" style="letter-spacing: -0.219px;">3</span><span class="c3 bg">100%</span><span class="c4" style="letter-spacing: -0.537px;">0.0%</span><span class="c5" style="letter-spacing: -0.219px;">20</span></div>
  <div class="r o" style="top:326.7px"><span class="c1" style="letter-spacing: 0.292px;">dureri</span><span class="c2" style="letter-spacing: -0.219px;">2</span><span class="c3 bg">100%</span><span class="c4" style="letter-spacing: -0.537px;">0.0%</span><span class="c5" style="letter-spacing: -0.219px;">20</span></div>
  <div class="r" style="top:362.9px"><span class="c1" style="letter-spacing: 0.33px;">picior</span><span class="c2" style="letter-spacing: -0.219px;">2</span><span class="c3 bg">100%</span><span class="c4" style="letter-spacing: -0.537px;">0.0%</span><span class="c5" style="letter-spacing: -0.219px;">20</span></div>
 </div>
</div>
<div class="card opp">
 <h2><svg class="em" style="left:.300px;top:-.500px;width:17.500px;height:17.500px" viewBox="0 0 36 36"><g transform="translate(18 0) scale(1.020 1) translate(-18 0)"><path d="M29 12c0 6.200-5 8.800-5 15.500 0 3.500-3.500 3.800-6 3.800-2.200 0-7-.8-7-3.800C11 20.800 7 18.200 7 12 7 5.800 12.300 1 18.200 1 24.200 1 29 5.800 29 12z" fill="#ffcf5c"></path><path d="M22.200 32.400c0 .8-.9 2.600-4.200 2.600s-4.200-1.800-4.200-2.600v-1.800h8.400z" fill="#ccd6dd"></path><path d="M22.200 10.300a1 1 0 0 0-1.400 0L18 13.100l-2.800-2.800a1 1 0 0 0-1.400 1.400l3.200 3.200V26a1 1 0 0 0 2 0V14.900l3.200-3.200a1 1 0 0 0 0-1.400z" fill="#f7b53c"></path><path d="M24 31a2 2 0 0 1-2 2h-8a2 2 0 0 1 0-4h8a2 2 0 0 1 2 2z" fill="#99aab5"></path><path d="M12 27h12v3H12z" fill="#99aab5"></path></g></svg><span style="letter-spacing: 0.1px;">Opportunity Finder - Zero Result Searches</span></h2>
 <p style="letter-spacing: -0.065px;">These searches returned no results. Consider adding products or content for these terms:</p>
 <div class="oc">
  <h4>"dureri artro"</h4>
  <div class="sb" style="letter-spacing: -0.359px;">2 searches</div>
  <div class="ago" style="letter-spacing: -0.094px;">1 week ago</div>
  <div class="btn b1" style="letter-spacing: 0.041px;">Add Product</div>
  <div class="btn b2" style="letter-spacing: -0.269px;">Search Existing</div>
 </div>
</div>

</div>
<div id="ft"><i style="letter-spacing: -0.261px;">Thank you for creating with <a>WordPress</a>.</i><span style="letter-spacing: -0.251px;">Version 6.8.2</span></div>


</body></html>
